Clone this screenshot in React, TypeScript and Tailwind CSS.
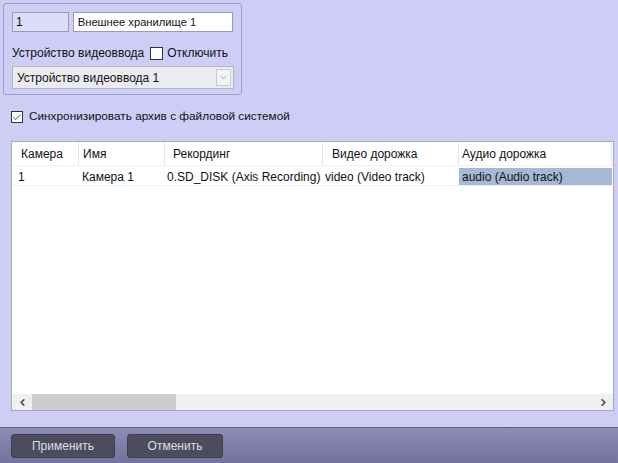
import { Check, ChevronDown, ChevronLeft, ChevronRight } from "lucide-react";

const columns = [
	{ title: "Камера", width: "w-[67px]", head: "pl-[9px]", cell: "pl-[6px]" },
	{ title: "Имя", width: "w-[86px]", head: "pl-[4px]", cell: "pl-[3px]" },
	{ title: "Рекординг", width: "w-[158px]", head: "pl-[8px]", cell: "pl-[2px]" },
	{ title: "Видео дорожка", width: "w-[136px]", head: "pl-[9px]", cell: "pl-[2px]" },
	{ title: "Аудио дорожка", width: "w-[153px]", head: "pl-[3px]", cell: "pl-[3px]" },
];

const rows = [["1", "Камера 1", "0.SD_DISK (Axis Recording)", "video (Video track)", "audio (Audio track)"]];

export default function App() {
	return (
		<div className="w-[618px] h-[463px] flex flex-col bg-[#cdcdf6] text-[12px] text-[#111] font-['Liberation_Sans',Arial,sans-serif] overflow-hidden">
			<div className="flex-1 flex flex-col px-[11px] pt-[3px]">
				{/* группа устройства */}
				<div className="w-[239px] -ml-[8px] h-[92px] rounded-[3px] border border-[#9d9dc6] px-[8px] pt-[8px] flex flex-col">
					<div className="flex gap-[4px]">
						<div className="w-[57px] h-[20px] border border-[#9a9ab0] bg-[#dcdcf8] px-[3px] leading-[18px]">1</div>
						<div className="w-[161px] h-[20px] border border-[#9a9ab0] bg-white px-[4px] leading-[18px] text-[11.2px]">Внешнее хранилище 1</div>
					</div>
					<div className="flex items-center mt-[13px] h-[16px]">
						<span>Устройство видеоввода</span>
						<span className="ml-[6px] w-[13px] h-[13px] border border-[#333] bg-white" />
						<span className="ml-[4px]">Отключить</span>
					</div>
					<div className="mt-[5px] w-[222px] h-[23px] border border-[#b4b4c4] bg-[#ebebf0] flex items-center pl-[4px] pr-[2px]">
						<span className="flex-1">Устройство видеоввода 1</span>
						<span className="w-[15px] h-[17px] border border-[#c9c9d4] bg-[#f4f4f6] flex items-center justify-center">
							<ChevronDown size={11} strokeWidth={1.3} className="text-[#666]" />
						</span>
					</div>
				</div>

				<div className="flex items-center mt-[15px] h-[14px]">
					<span className="w-[12px] h-[12px] border border-[#333] bg-white flex items-center justify-center">
						<Check size={11} strokeWidth={2} className="text-[#222]" />
					</span>
					<span className="ml-[6px] text-[11.8px]">Синхронизировать архив с файловой системой</span>
				</div>

				{/* таблица */}
				<div className="mt-[17px] w-[603px] h-[270px] border border-[#a8a8b8] bg-white flex flex-col">
					<div className="flex h-[24px] border-b border-[#f0f0f0]">
						{columns.map((c) => (
							<div key={c.title} className={`${c.width} ${c.head} h-full border-r border-[#e6e6e6] leading-[24px]`}>
								{c.title}
							</div>
						))}
					</div>
					{rows.map((r, i) => (
						<div key={i} className="flex h-[18px] mt-[2px] border-b border-[#f0f0f0]">
							{r.map((cell, j) => (
								<div
									key={j}
									className={`${columns[j].width} ${columns[j].cell} leading-[18px] whitespace-nowrap ${
										j === r.length - 1 ? "bg-[#a3b9d6]" : ""
									}`}
								>
									{cell}
								</div>
							))}
						</div>
					))}
					<div className="flex-1" />
					<div className="h-[16px] bg-[#f0f0f0] flex items-center">
						<span className="w-[20px] flex items-center justify-center">
							<ChevronLeft size={11} strokeWidth={3.5} className="text-[#444]" />
						</span>
						<span className="w-[144px] h-full bg-[#cdcdcd]" />
						<span className="flex-1" />
						<span className="w-[20px] flex items-center justify-center">
							<ChevronRight size={11} strokeWidth={3.5} className="text-[#444]" />
						</span>
					</div>
				</div>
			</div>

			{/* нижняя панель */}
			<div className="h-[36px] border-t border-[#5e5e78] bg-gradient-to-b from-[#8e8cb4] to-[#74729e] flex items-center gap-[12px] px-[11px]">
				<button className="w-[104px] h-[24px] rounded-[3px] bg-[#4c4c5c] border border-[#3e3e4c] text-[#dedee8] text-[12px]">Применить</button>
				<button className="w-[96px] h-[24px] rounded-[3px] bg-[#4c4c5c] border border-[#3e3e4c] text-[#dedee8] text-[12px]">Отменить</button>
			</div>
		</div>
	);
}
